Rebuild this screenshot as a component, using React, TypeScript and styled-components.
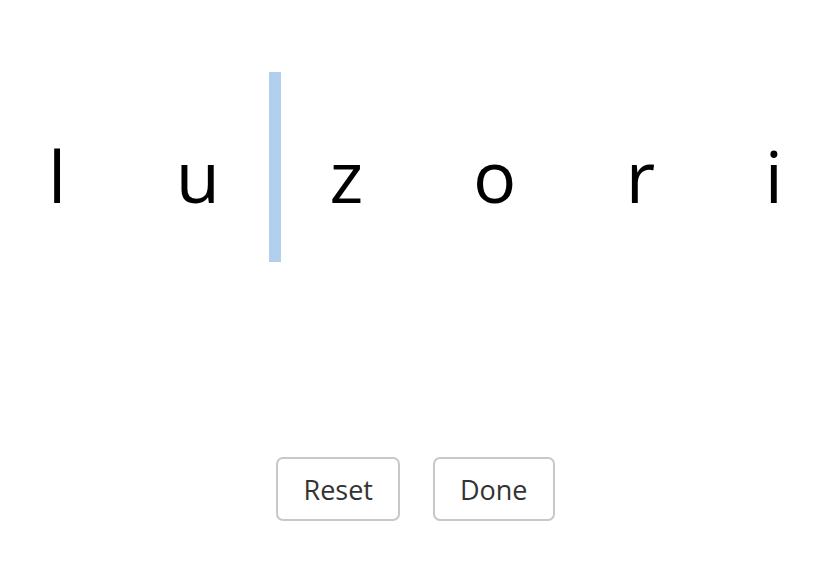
import React from "react";
import styled, { createGlobalStyle } from "styled-components";

const Global = createGlobalStyle`
  html, body { margin: 0; padding: 0; background: #ffffff; }
  body { font-family: "Open Sans", "Noto Sans", sans-serif; }
`;

const Page = styled.div`
  width: 831px;
  padding-top: 72px;
  display: flex;
  flex-direction: column;
  align-items: center;
`;

const Row = styled.div`
  display: flex;
  align-items: stretch;
  height: 190px;
  gap: 48.8px;
`;

const Letter = styled.span`
  font-size: 72px;
  line-height: 190px;
  padding-top: 8px;
  color: #000;
  user-select: none;
`;

const Slot = styled.div<{ $active?: boolean }>`
  width: 12px;
  background: ${(p) => (p.$active ? "#b3cfee" : "transparent")};
`;

const Buttons = styled.div`
  display: flex;
  gap: 33px;
  margin-top: 195px;
`;

const Button = styled.button`
  font-family: "Open Sans", "Noto Sans", sans-serif;
  font-size: 27px;
  color: #333;
  background: #fff;
  border: 2px solid #c8c8c8;
  border-radius: 7px;
  height: 64px;
  padding: 0 25px;
  cursor: pointer;
`;

const letters = ["l", "u", "z", "o", "r", "i"];
const activeSlot = 1;

export default function App() {
  return (
    <>
      <Global />
      <Page>
        <Row>
          {letters.map((ch, i) => (
            <React.Fragment key={i}>
              {i > 0 && <Slot $active={i - 1 === activeSlot} />}
              <Letter>{ch}</Letter>
            </React.Fragment>
          ))}
        </Row>
        <Buttons>
          <Button>Reset</Button>
          <Button>Done</Button>
        </Buttons>
      </Page>
    </>
  );
}
